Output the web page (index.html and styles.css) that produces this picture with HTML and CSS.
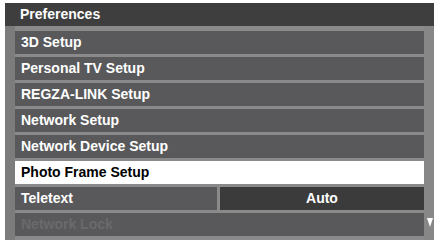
FILE: index.html
```html
<!DOCTYPE html>
<html>
<head>
<meta charset="utf-8">
<link rel="stylesheet" href="styles.css">
</head>
<body>
<div class="screen">
  <div class="header">Preferences</div>
  <div class="body">
    <div class="rail"></div>
    <div class="list">
      <div class="row">3D Setup</div>
      <div class="row">Personal TV Setup</div>
      <div class="row">REGZA-LINK Setup</div>
      <div class="row">Network Setup</div>
      <div class="row">Network Device Setup</div>
      <div class="row selected">Photo Frame Setup</div>
      <div class="row split">
        <div class="label">Teletext</div>
        <div class="value">Auto</div>
      </div>
      <div class="row disabled">Network Lock</div>
    </div>
    <div class="scroll">
      <svg class="arrow" width="6" height="9" viewBox="0 0 6 9"><polygon points="0,0 6,0 3,9" fill="#ffffff"/></svg>
    </div>
  </div>
</div>
</body>
</html>
```
FILE: styles.css
```css
html, body {
  margin: 0;
  padding: 0;
  background: #ffffff;
}
body {
  font-family: "Liberation Sans", Arial, sans-serif;
  font-weight: bold;
  font-size: 14px;
  color: #ffffff;
}
.screen {
  margin: 3px 0 0 5px;
  width: 429px;
}
.header {
  height: 23px;
  line-height: 23px;
  background: #3e3e3e;
  padding-left: 15px;
}
.body {
  display: flex;
  height: 214px;
  background: #8a8a8a;
}
.rail {
  width: 10px;
  background: #7c7c7c;
}
.list {
  flex: 1;
  display: flex;
  flex-direction: column;
  gap: 3px;
  padding-top: 5px;
}
.row {
  height: 23px;
  line-height: 23px;
  background: #59595b;
  padding-left: 6px;
}
.row.selected {
  background: #ffffff;
  color: #000000;
}
.row.split {
  display: flex;
  padding-left: 0;
  background: #8a8a8a;
  gap: 3px;
}
.split .label {
  width: 196px;
  padding-left: 6px;
  background: #59595b;
}
.split .value {
  flex: 1;
  text-align: center;
  background: #3b3b3b;
}
.row.disabled {
  color: #6a6a6c;
}
.scroll {
  width: 10px;
  background: #878787;
  position: relative;
}
.arrow {
  position: absolute;
  left: 3px;
  top: 192px;
}
```
